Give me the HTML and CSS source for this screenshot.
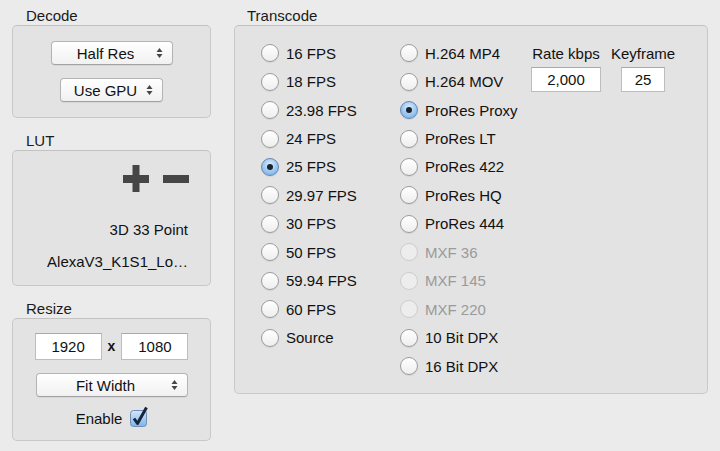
FILE: index.html
```html
<!DOCTYPE html>
<html>
<head>
<meta charset="utf-8">
<link rel="stylesheet" href="styles.css">
</head>
<body>
<div class="app">
  <div class="left">
    <div class="group-label">Decode</div>
    <div class="box decode">
      <div class="popup w-half"><span class="ptext">Half Res</span><svg class="arrows" width="7" height="12" viewBox="0 0 7 12"><path d="M0.5 5 L3.5 1 L6.5 5 Z M0.5 7 L3.5 11 L6.5 7 Z"/></svg></div>
      <div class="popup w-gpu"><span class="ptext">Use GPU</span><svg class="arrows" width="7" height="12" viewBox="0 0 7 12"><path d="M0.5 5 L3.5 1 L6.5 5 Z M0.5 7 L3.5 11 L6.5 7 Z"/></svg></div>
    </div>

    <div class="group-label next">LUT</div>
    <div class="box lut">
      <div class="lut-icons">
        <svg width="26" height="27" viewBox="0 0 26 27"><rect x="0" y="10" width="26" height="8" fill="#464646"/><rect x="9.5" y="0" width="7" height="27" fill="#464646"/></svg>
        <svg width="26" height="27" viewBox="0 0 26 27"><rect x="0" y="10" width="26" height="8" fill="#464646"/></svg>
      </div>
      <div class="lut-line first">3D 33 Point</div>
      <div class="lut-line">AlexaV3_K1S1_Lo…</div>
    </div>

    <div class="group-label next">Resize</div>
    <div class="box resize">
      <div class="dims">
        <div class="field w-dim">1920</div>
        <span class="times">x</span>
        <div class="field w-dim">1080</div>
      </div>
      <div class="popup w-fit"><span class="ptext">Fit Width</span><svg class="arrows" width="7" height="12" viewBox="0 0 7 12"><path d="M0.5 5 L3.5 1 L6.5 5 Z M0.5 7 L3.5 11 L6.5 7 Z"/></svg></div>
      <div class="enable">
        <span>Enable</span>
        <svg width="20" height="22" viewBox="0 0 20 22">
          <defs><linearGradient id="cb" x1="0" y1="0" x2="0" y2="1"><stop offset="0" stop-color="#d3e6f9"/><stop offset="1" stop-color="#7fb4ea"/></linearGradient></defs>
          <rect x="1.5" y="5.5" width="16" height="16" rx="3" fill="url(#cb)" stroke="#6f8db5"/>
          <path d="M5 13.5 L8.5 18.5 L17.5 2.5" fill="none" stroke="#18263d" stroke-width="3" stroke-linejoin="round"/>
        </svg>
      </div>
    </div>
  </div>

  <div class="right">
    <div class="group-label tlabel">Transcode</div>
    <div class="box transcode">
      <div class="col c1">
        <div class="row"><span class="radio"></span><span>16 FPS</span></div>
        <div class="row"><span class="radio"></span><span>18 FPS</span></div>
        <div class="row"><span class="radio"></span><span>23.98 FPS</span></div>
        <div class="row"><span class="radio"></span><span>24 FPS</span></div>
        <div class="row"><span class="radio on"></span><span>25 FPS</span></div>
        <div class="row"><span class="radio"></span><span>29.97 FPS</span></div>
        <div class="row"><span class="radio"></span><span>30 FPS</span></div>
        <div class="row"><span class="radio"></span><span>50 FPS</span></div>
        <div class="row"><span class="radio"></span><span>59.94 FPS</span></div>
        <div class="row"><span class="radio"></span><span>60 FPS</span></div>
        <div class="row"><span class="radio"></span><span>Source</span></div>
      </div>
      <div class="col c2">
        <div class="row"><span class="radio"></span><span>H.264 MP4</span></div>
        <div class="row"><span class="radio"></span><span>H.264 MOV</span></div>
        <div class="row"><span class="radio on"></span><span>ProRes Proxy</span></div>
        <div class="row"><span class="radio"></span><span>ProRes LT</span></div>
        <div class="row"><span class="radio"></span><span>ProRes 422</span></div>
        <div class="row"><span class="radio"></span><span>ProRes HQ</span></div>
        <div class="row"><span class="radio"></span><span>ProRes 444</span></div>
        <div class="row dis"><span class="radio"></span><span>MXF 36</span></div>
        <div class="row dis"><span class="radio"></span><span>MXF 145</span></div>
        <div class="row dis"><span class="radio"></span><span>MXF 220</span></div>
        <div class="row"><span class="radio"></span><span>10 Bit DPX</span></div>
        <div class="row"><span class="radio"></span><span>16 Bit DPX</span></div>
      </div>
      <div class="settings">
        <div class="setting w-rate">
          <div class="row center">Rate kbps</div>
          <div class="field w-rate-f">2,000</div>
        </div>
        <div class="setting w-key">
          <div class="row center">Keyframe</div>
          <div class="field w-key-f">25</div>
        </div>
      </div>
    </div>
  </div>
</div>
</body>
</html>
```

FILE: styles.css
```css
html, body {
  margin: 0;
  padding: 0;
}
body {
  width: 720px;
  height: 451px;
  overflow: hidden;
  background: #ebebeb;
  font-family: "Liberation Sans", Arial, sans-serif;
  font-size: 15px;
  line-height: 19px;
  color: #111;
}
.app {
  display: flex;
  gap: 23px;
  padding: 6px 12px 0 12px;
}
.left {
  width: 199px;
  display: flex;
  flex-direction: column;
}
.right {
  width: 474px;
  display: flex;
  flex-direction: column;
}
.group-label {
  height: 19px;
  padding-left: 14px;
  color: #1a1a1a;
}
.group-label.next {
  margin-top: 13px;
}
.tlabel {
  padding-left: 13px;
}
.box {
  box-sizing: border-box;
  border: 1px solid #c8c8c8;
  border-top-color: #c2c2c2;
  border-radius: 5px;
  background: #e3e3e3;
}
.decode {
  height: 93px;
  padding-top: 15px;
  display: flex;
  flex-direction: column;
  align-items: center;
  gap: 13px;
}
.popup {
  box-sizing: border-box;
  height: 24px;
  display: flex;
  align-items: center;
  gap: 4px;
  padding: 0 9px 0 8px;
  border: 1px solid #b4b4b4;
  border-bottom-color: #a2a2a2;
  border-radius: 4px;
  background: linear-gradient(#ffffff, #f1f1f1);
  box-shadow: 0 1px 1px rgba(0, 0, 0, 0.06);
}
.ptext {
  flex: 1;
  text-align: center;
  color: #111;
}
.arrows {
  fill: #454545;
  flex: none;
}
.w-half { width: 122px; }
.w-gpu { width: 103px; }
.w-fit { width: 152px; }

.lut {
  height: 136px;
  padding: 14px 22px 0 0;
  display: flex;
  flex-direction: column;
  align-items: flex-end;
}
.lut-icons {
  display: flex;
  gap: 14px;
  margin-right: -1px;
}
.lut-line {
  margin-top: 13px;
}
.lut-line.first {
  margin-top: 28px;
}

.resize {
  height: 123px;
  padding-top: 14px;
  display: flex;
  flex-direction: column;
  align-items: center;
}
.dims {
  display: flex;
  align-items: center;
  gap: 6px;
}
.times {
  font-weight: bold;
  font-size: 14px;
}
.field {
  box-sizing: border-box;
  background: #fff;
  border: 1px solid #bdbdbd;
  border-top-color: #a9a9a9;
  text-align: center;
  color: #111;
}
.w-dim {
  width: 67px;
  height: 27px;
  line-height: 25px;
}
.resize .popup {
  margin-top: 13px;
}
.enable {
  margin-top: 10px;
  height: 22px;
  display: flex;
  align-items: center;
  gap: 7px;
  padding-left: 2px;
}
.enable svg {
  margin-top: -5px;
}

.transcode {
  height: 369px;
  padding: 13px 0 0 26px;
  display: flex;
}
.col {
  display: flex;
  flex-direction: column;
}
.c1 { width: 139px; }
.c2 { width: 131px; }
.row {
  height: 28.45px;
  display: flex;
  align-items: center;
  gap: 7px;
  white-space: nowrap;
}
.row.center {
  justify-content: center;
}
.radio {
  box-sizing: border-box;
  width: 18px;
  height: 18px;
  border-radius: 50%;
  border: 1px solid #9c9c9c;
  background: linear-gradient(#ffffff, #eeeeee);
  box-shadow: 0 1px 1px rgba(0, 0, 0, 0.08);
  flex: none;
  display: flex;
  align-items: center;
  justify-content: center;
}
.radio.on {
  border-color: #6487b3;
  background: radial-gradient(circle at 50% 35%, #e0eefc 0%, #a6cdf3 45%, #6da9e6 100%);
}
.radio.on::after {
  content: "";
  width: 6px;
  height: 6px;
  border-radius: 50%;
  background: #1b2230;
}
.row.dis {
  color: #9a9a9a;
}
.row.dis .radio {
  border-color: #cdcdcd;
  background: #ededed;
  box-shadow: none;
}
.settings {
  display: flex;
  gap: 9px;
}
.setting {
  display: flex;
  flex-direction: column;
  align-items: center;
}
.w-rate { width: 70px; }
.w-key { width: 66px; }
.w-rate-f {
  width: 70px;
  height: 25px;
  line-height: 23px;
}
.w-key-f {
  width: 44px;
  height: 25px;
  line-height: 23px;
}
```
